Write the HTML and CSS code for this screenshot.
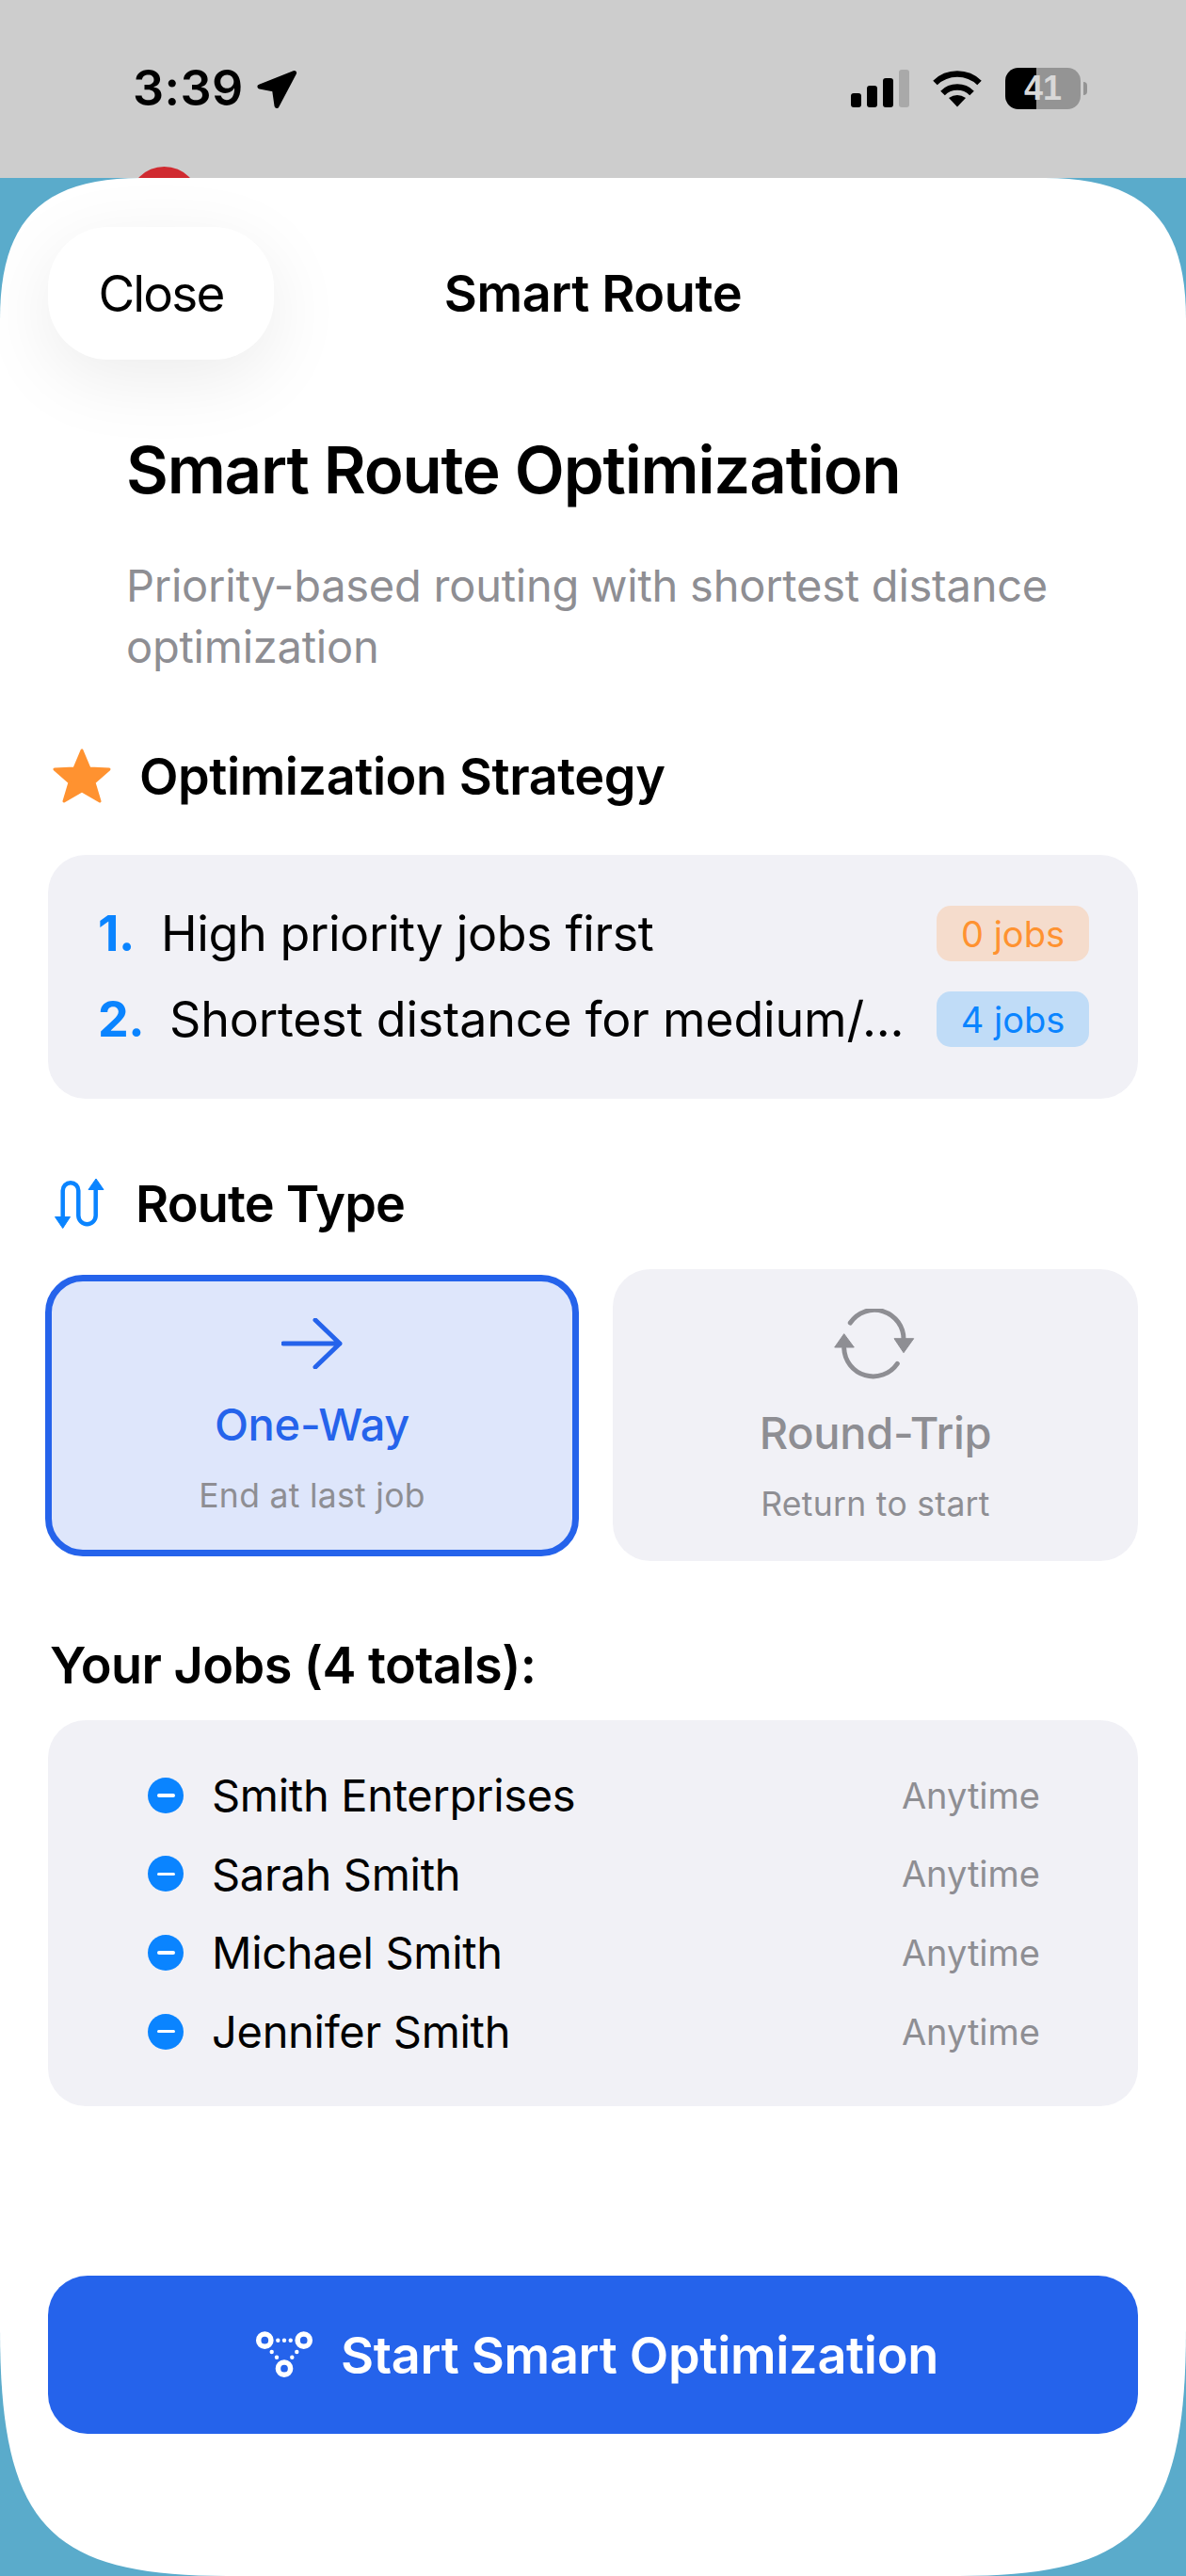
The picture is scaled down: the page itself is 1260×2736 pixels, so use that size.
FILE: index.html
```html
<!DOCTYPE html>
<html lang="en">
<head>
  <meta charset="utf-8">
  <title>Smart Route</title>
  <link rel="stylesheet" href="styles.css">
</head>
<body>
  <div class="statusbar">
    <div class="status-left">
      <span class="clock">3:39</span>
      <svg class="nav-arrow" viewBox="0 0 44 44"><path d="M39.5 5.5 L3 20 L18.5 23 L21 40.5 Z"/></svg>
    </div>
    <div class="status-right">
      <div class="signal"><i class="b1"></i><i class="b2"></i><i class="b3"></i><i class="b4"></i></div>
      <svg class="wifi" viewBox="0 0 54 40">
        <path class="wifi-arc" d="M3.5 14 A34 34 0 0 1 50.5 14"/>
        <path class="wifi-arc" d="M11.5 25 A22 22 0 0 1 42.5 25"/>
        <path d="M18 30 Q27 24 36 30 L27 39.5 Z"/>
      </svg>
      <div class="battery"><span>41</span></div>
      <div class="battery-nub"></div>
    </div>
  </div>
  <div class="red-dot"></div>

  <div class="sheet">
    <div class="header">
      <button class="close">Close</button>
      <div class="header-title">Smart Route</div>
    </div>

    <h1 class="title">Smart Route Optimization</h1>
    <p class="subtitle">Priority-based routing with shortest distance optimization</p>

    <div class="section-head strategy-head">
      <svg class="star" viewBox="0 0 62 58"><path d="M31 2 L39 21 L60 22 L44 36 L50 56 L31 45 L12 56 L18 36 L2 22 L23 21 Z"/></svg>
      <span>Optimization Strategy</span>
    </div>
    <div class="card strategy">
      <div class="strategy-row">
        <span class="num">1.</span><span class="rule">High priority jobs first</span>
        <span class="badge orange">0 jobs</span>
      </div>
      <div class="strategy-row">
        <span class="num wide">2.</span><span class="rule rule-long">Shortest distance for medium/...</span>
        <span class="badge blue">4 jobs</span>
      </div>
    </div>

    <div class="section-head route-head">
      <svg class="route-icon" viewBox="0 0 54 54">
        <path class="route-line" d="M8.7 42 V13.5 A8.3 8.3 0 0 1 25.3 13.5 V40 A9.2 9.2 0 0 0 43.7 40 V12"/>
        <path class="route-tip" d="M0.5 41.5 H16.5 L8.7 53.5 Z M36 12.5 H52 L44 1 Z"/>
      </svg>
      <span>Route Type</span>
    </div>
    <div class="route-types">
      <div class="route-card selected">
        <svg class="arrow-icon" viewBox="0 0 66 54"><path d="M2 27 H62 M36 2 L62 27 L36 52"/></svg>
        <div class="route-name">One-Way</div>
        <div class="route-sub">End at last job</div>
      </div>
      <div class="route-card">
        <svg class="loop-icon" viewBox="-2 0 88 76">
          <path class="loop-line" d="M15.3 15 A31 31 0 0 1 72 33"/>
          <path class="loop-line" d="M65.3 58.3 A31 31 0 0 1 8.7 42"/>
          <path class="loop-tip" d="M62 31.7 H82.7 L72 46.7 Z M-1.3 41 H19.3 L8.7 26.7 Z"/>
        </svg>
        <div class="route-name">Round-Trip</div>
        <div class="route-sub">Return to start</div>
      </div>
    </div>

    <div class="jobs-head">Your Jobs (4 totals):</div>
    <div class="card jobs">
      <div class="job"><i class="minus"></i><span class="job-name">Smith Enterprises</span><span class="job-time">Anytime</span></div>
      <div class="job"><i class="minus"></i><span class="job-name">Sarah Smith</span><span class="job-time">Anytime</span></div>
      <div class="job"><i class="minus"></i><span class="job-name">Michael Smith</span><span class="job-time">Anytime</span></div>
      <div class="job"><i class="minus"></i><span class="job-name">Jennifer Smith</span><span class="job-time">Anytime</span></div>
    </div>

    <button class="start">
      <svg class="nodes-icon" viewBox="15 3 70 58">
        <circle class="node" cx="29.3" cy="16.7" r="6.6"/>
        <circle class="node" cx="70.7" cy="16.7" r="6.6"/>
        <circle class="node" cx="50" cy="46.7" r="6.6"/>
        <circle cx="43.3" cy="16.7" r="2.2"/><circle cx="50" cy="16.7" r="2.2"/><circle cx="56.7" cy="16.7" r="2.2"/>
        <circle cx="36.7" cy="29" r="2.2"/><circle cx="42" cy="34.7" r="2.2"/>
        <circle cx="63.3" cy="29" r="2.2"/><circle cx="58.3" cy="34.7" r="2.2"/>
      </svg>
      <span>Start Smart Optimization</span>
    </button>
  </div>
</body>
</html>
```

FILE: styles.css
```css
html, body {
  margin: 0;
  padding: 0;
}
body {
  position: relative;
  width: 1260px;
  height: 2736px;
  overflow: hidden;
  background-color: #5aabcb;
  font-family: Inter, "Liberation Sans", sans-serif;
  color: #000;
}
button {
  font-family: inherit;
  border: 0;
  padding: 0;
}

/* status bar */
.statusbar {
  height: 189px;
  background-color: #cdcdcd;
  display: flex;
  justify-content: space-between;
  align-items: flex-start;
  box-sizing: border-box;
  padding: 72px 105px 0 141px;
}
.status-left {
  display: flex;
  align-items: center;
  gap: 14px;
  height: 44px;
}
.clock {
  font-size: 52px;
  line-height: 44px;
  font-weight: 600;
  letter-spacing: 0.4px;
}
.nav-arrow {
  width: 44px;
  height: 44px;
}
.nav-arrow path {
  fill: #000;
  stroke: #000;
  stroke-width: 5;
  stroke-linejoin: round;
}
.status-right {
  display: flex;
  align-items: center;
  height: 44px;
}
.signal {
  display: flex;
  align-items: flex-end;
  gap: 6px;
  height: 40px;
  margin-right: 24px;
}
.signal i {
  display: block;
  width: 11px;
  border-radius: 3px;
  background: #000;
}
.signal .b1 { height: 15px; }
.signal .b2 { height: 23px; }
.signal .b3 { height: 31px; }
.signal .b4 { height: 40px; background: #a9a9a9; }
.wifi {
  width: 54px;
  height: 40px;
  margin-right: 24px;
}
.wifi-arc {
  fill: none;
  stroke: #000;
  stroke-width: 6.5;
}
.battery {
  width: 80px;
  height: 44px;
  border-radius: 14px;
  background: linear-gradient(to right, #000 33px, #949494 33px);
  display: flex;
  align-items: center;
  justify-content: center;
  font-family: "Liberation Sans", sans-serif;
  font-size: 36px;
  font-weight: 700;
  color: #d8d8d8;
}
.battery-nub {
  width: 4px;
  height: 14px;
  margin-left: 3px;
  border-radius: 0 4px 4px 0;
  background: #949494;
}
.red-dot {
  position: absolute;
  left: 137px;
  top: 177px;
  width: 75px;
  height: 75px;
  border-radius: 50%;
  background: #d02a30;
}

/* sheet */
.sheet {
  position: relative;
  height: 2547px;
  box-sizing: border-box;
  padding: 52px 51px 0;
  background: #fff;
  clip-path: path("M150 0 H1110 C1215 0 1260 45 1260 150 V2284 C1260 2491 1210 2547 1019 2547 H241 C50 2547 0 2491 0 2284 V150 C0 45 45 0 150 0 Z");
}
.header {
  display: grid;
  grid-template-columns: 240px 1fr 240px;
  align-items: center;
  height: 141px;
}
.close {
  grid-column: 1;
  height: 141px;
  border-radius: 64px;
  background: #fff;
  box-shadow: 0 20px 80px rgba(0, 0, 0, 0.08);
  font-size: 53px;
  letter-spacing: -1.8px;
  color: #000;
}
.header-title {
  grid-column: 2;
  text-align: center;
  font-size: 54px;
  font-weight: 600;
  letter-spacing: -0.4px;
}
.title {
  margin: 77px 0 0 83px;
  font-size: 69px;
  line-height: 80px;
  font-weight: 600;
  letter-spacing: -1.2px;
}
.subtitle {
  margin: 50px 0 0 83px;
  font-size: 47px;
  line-height: 65px;
  color: #8e8e93;
  letter-spacing: -0.24px;
}
.section-head {
  display: flex;
  align-items: center;
  height: 70px;
  font-size: 54px;
  font-weight: 600;
  letter-spacing: -0.43px;
}
.strategy-head {
  margin-top: 70px;
  padding-left: 5px;
  gap: 30px;
}
.star {
  width: 62px;
  height: 58px;
}
.star path {
  fill: #ff9230;
  stroke: #ff9230;
  stroke-width: 3;
  stroke-linejoin: round;
}
.card {
  background: #f1f1f6;
  border-radius: 40px;
}
.strategy {
  margin-top: 49px;
  height: 259px;
  box-sizing: border-box;
  padding: 54px 52px 0 53px;
  display: flex;
  flex-direction: column;
  gap: 32px;
}
.strategy-row {
  display: flex;
  align-items: center;
  height: 59px;
  font-size: 52px;
  letter-spacing: -0.4px;
}
.num {
  width: 67px;
  font-weight: 700;
  color: #0a84ff;
}
.num.wide {
  width: 76px;
}
.rule {
  flex: 1;
  white-space: nowrap;
}
.rule-long {
  letter-spacing: -0.2px;
}
.badge {
  width: 162px;
  height: 59px;
  border-radius: 15px;
  display: flex;
  align-items: center;
  justify-content: center;
  font-size: 38px;
  letter-spacing: 0;
}
.badge.orange {
  background: #f5dccc;
  color: #ff9230;
}
.badge.blue {
  background: #c0dcf7;
  color: #0a84ff;
}
.route-head {
  margin-top: 76px;
  padding-left: 7px;
  gap: 32px;
  letter-spacing: -0.8px;
}
.route-icon {
  width: 54px;
  height: 54px;
}
.route-line {
  fill: none;
  stroke: #0a84ff;
  stroke-width: 4.5;
}
.route-tip {
  fill: #0a84ff;
  stroke: #0a84ff;
  stroke-linejoin: round;
}
.route-types {
  margin-top: 35px;
  display: grid;
  grid-template-columns: 564px 558px;
  gap: 36px;
  height: 310px;
}
.route-card {
  box-sizing: border-box;
  height: 310px;
  padding-top: 42px;
  border-radius: 40px;
  background: #f1f1f6;
  display: flex;
  flex-direction: column;
  align-items: center;
  color: #8e8e93;
}
.route-card.selected {
  height: 299px;
  margin: 6px 0 0 -3px;
  width: 567px;
  padding-top: 39px;
  border: 7px solid #2563eb;
  background: #dee6fb;
  color: #2563eb;
}
.arrow-icon {
  width: 66px;
  height: 54px;
  flex: none;
}
.arrow-icon path {
  fill: none;
  stroke: #2563eb;
  stroke-width: 5;
  stroke-linecap: round;
  stroke-linejoin: round;
}
.loop-icon {
  width: 88px;
  height: 76px;
  flex: none;
}
.loop-line {
  fill: none;
  stroke: #8e8e93;
  stroke-width: 5;
  stroke-linecap: round;
}
.loop-tip {
  fill: #8e8e93;
  stroke: #8e8e93;
  stroke-linejoin: round;
}
.route-name {
  margin-top: 26px;
  font-size: 47px;
  line-height: 60px;
  font-weight: 500;
  letter-spacing: -0.3px;
}
.route-sub {
  margin-top: 23px;
  font-size: 35.5px;
  line-height: 46px;
  color: #8e8e93;
  letter-spacing: 0.3px;
}
.selected .route-name {
  margin-top: 29px;
}
.selected .route-sub {
  margin-top: 23px;
}
.jobs-head {
  margin: 76px 0 0 2px;
  font-size: 54px;
  line-height: 70px;
  font-weight: 600;
  letter-spacing: -0.55px;
}
.jobs {
  margin-top: 23px;
  height: 410px;
  box-sizing: border-box;
  padding: 38px 104px 0 106px;
}
.job {
  display: flex;
  align-items: center;
  gap: 30px;
  height: 83.6px;
}
.minus {
  width: 38px;
  height: 38px;
  flex: none;
  border-radius: 50%;
  background: #0a84ff;
  display: flex;
  align-items: center;
  justify-content: center;
}
.minus::before {
  content: "";
  width: 19px;
  height: 3.5px;
  border-radius: 2px;
  background: #fff;
}
.job-name {
  flex: 1;
  font-size: 47px;
  letter-spacing: -0.3px;
}
.job-time {
  font-size: 38px;
  color: #8e8e93;
}
.start {
  display: flex;
  align-items: center;
  justify-content: center;
  gap: 25px;
  width: 100%;
  height: 168px;
  margin-top: 180px;
  padding-left: 4px;
  border-radius: 42px;
  background: #2563eb;
  color: #fff;
  font-size: 54px;
  font-weight: 600;
  letter-spacing: -0.3px;
}
.nodes-icon {
  width: 70px;
  height: 58px;
  flex: none;
}
.nodes-icon circle {
  fill: #fff;
}
.nodes-icon .node {
  fill: none;
  stroke: #fff;
  stroke-width: 5.5;
}
```
